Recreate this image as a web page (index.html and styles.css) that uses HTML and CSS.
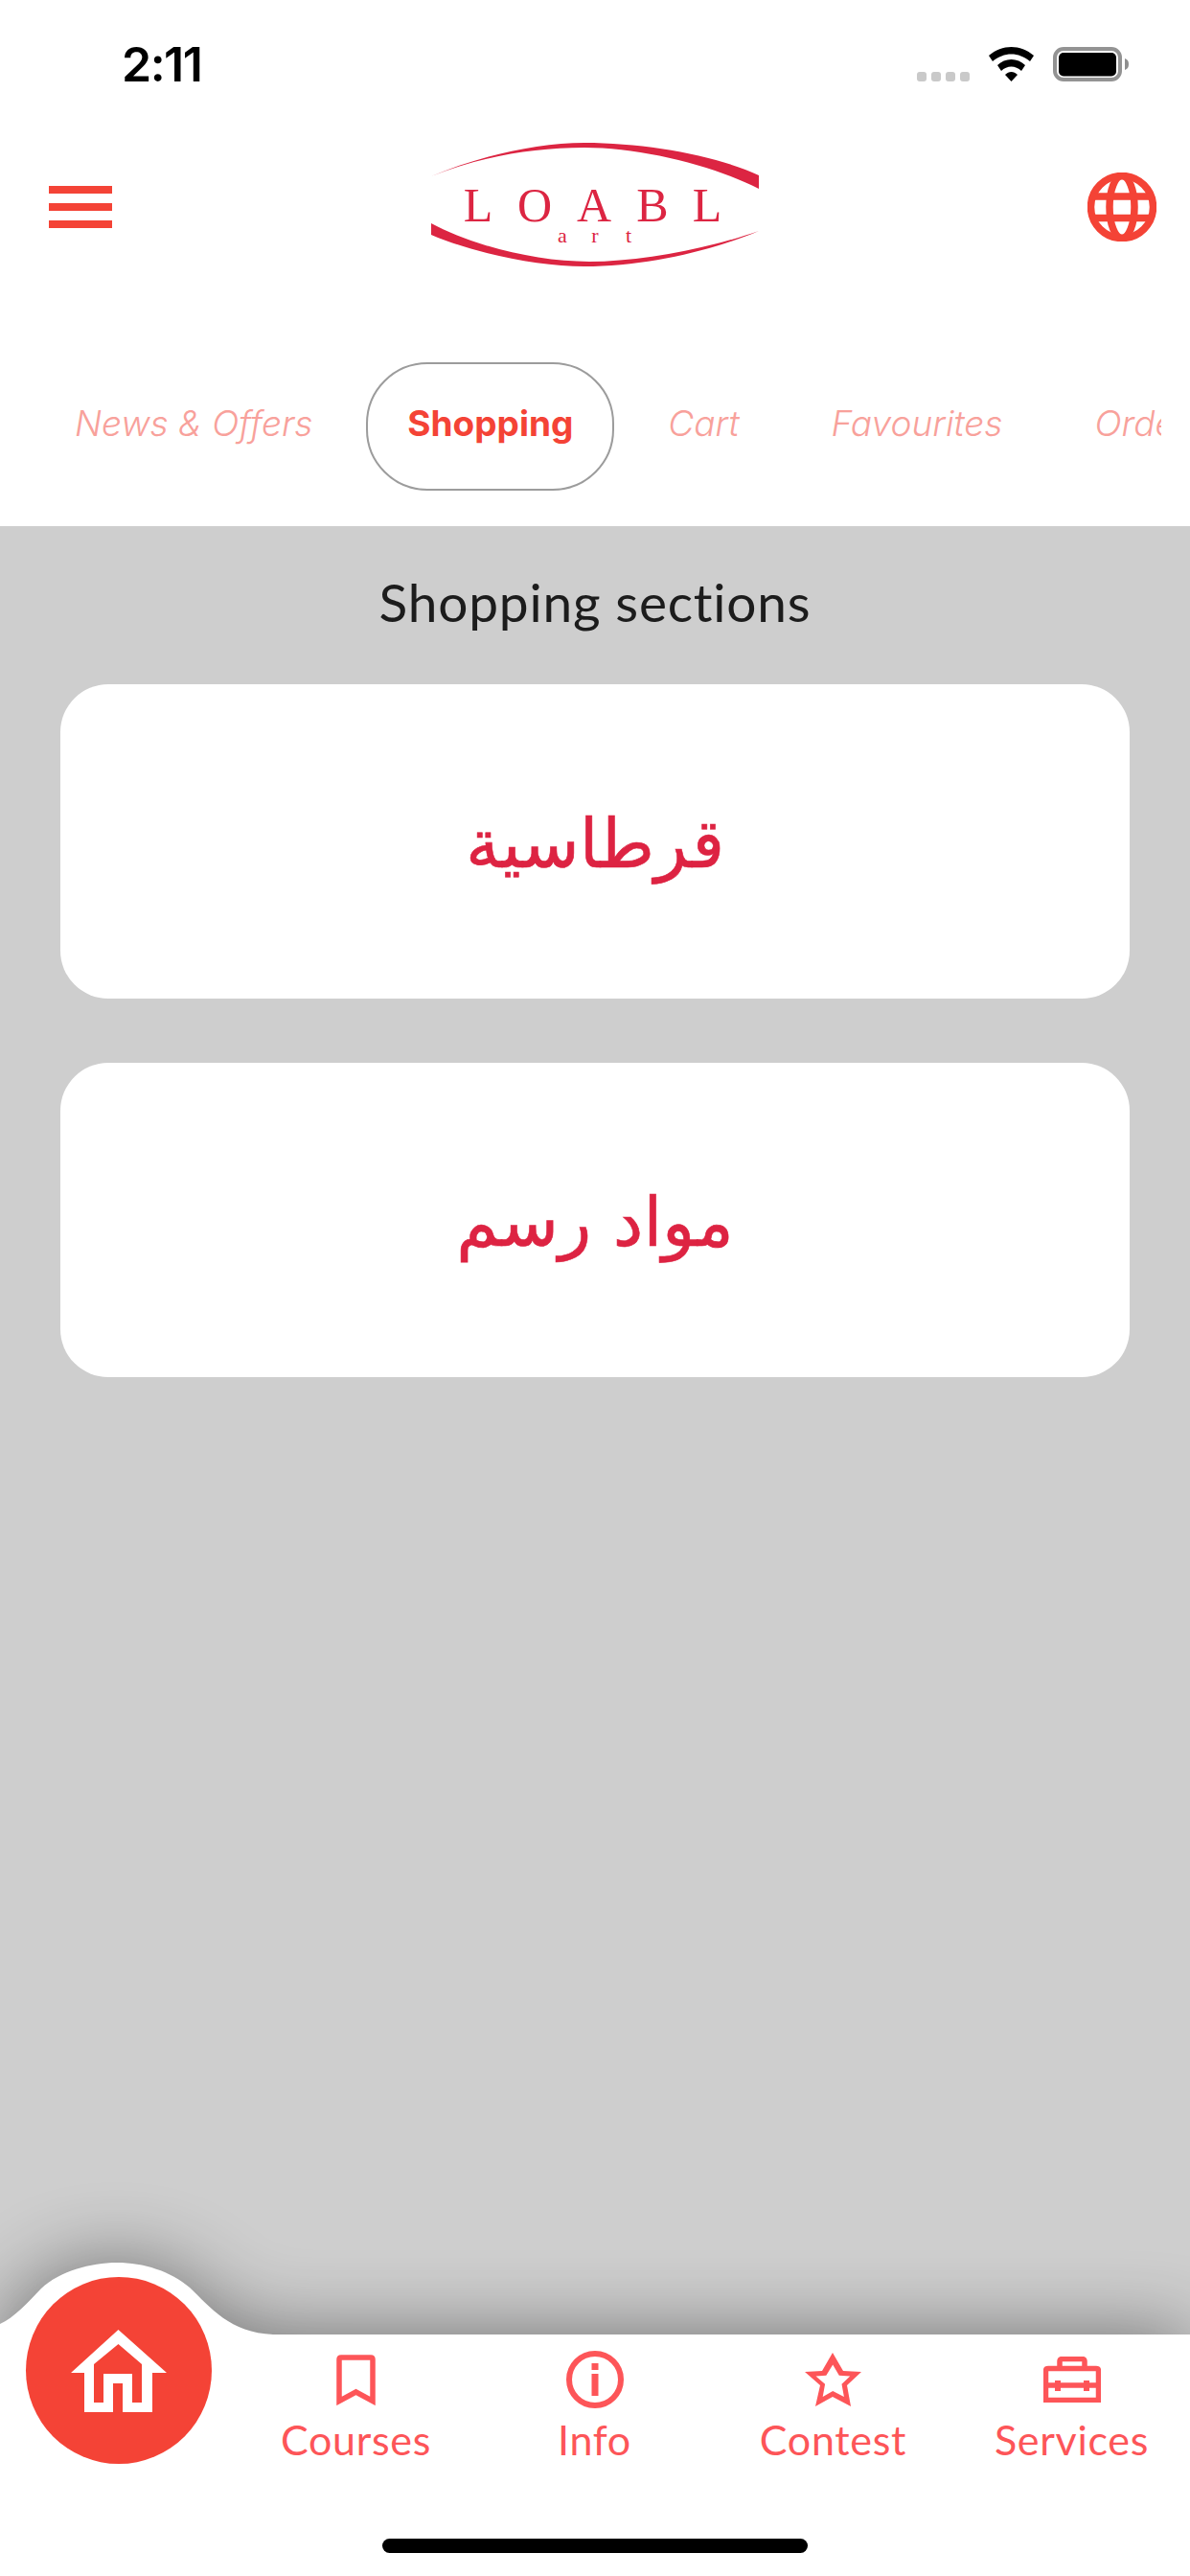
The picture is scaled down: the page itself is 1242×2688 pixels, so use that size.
FILE: index.html
```html
<!DOCTYPE html>
<html lang="en">
<head>
<meta charset="utf-8">
<title>LOABL art</title>
<link rel="stylesheet" href="styles.css">
</head>
<body>
<div class="screen">
  <div class="status">
    <span class="time">2:11</span>
    <div class="status-icons">
      <div class="signal"><i></i><i></i><i></i><i></i></div>
      <svg class="wifi" viewBox="0 0 47 36"><path d="M0 9C14-3 33-3 47 9L43 15C31 5 16 5 4 15Z"/><path d="M9 19C17 11 30 11 38 19L34 25C28 19 19 19 13 25Z"/><path d="M17 29C21 25 26 25 30 29L23.500 36Z"/></svg>
      <svg class="battery" viewBox="0 0 79 36"><rect class="batt-shell" x="2" y="2" width="68" height="32" rx="9"/><rect x="6" y="6" width="60" height="24.500" rx="5"/><path class="batt-nub" d="M75 12C78 13 79 15 79 18S78 23 75 24Z"/></svg>
    </div>
  </div>

  <header class="topbar">
    <div class="burger"><i></i><i></i><i></i></div>
    <svg class="logo" viewBox="0 0 342 129">
      <path d="M0 35C50 14 110 0 160 0C225 0 300 14 342 34V48C295 24 220 5 160 5C105 5 50 15 0 35Z"/>
      <path d="M0 84V96C45 115 110 129 160 129C225 129 295 112 342 92C290 110 220 124 165 124C110 124 45 108 0 84Z"/>
      <text class="logo-main" x="49 108 170 231 288" y="82">LOABL</text>
      <text class="logo-sub" x="137 171 206" y="104">art</text>
    </svg>
    <svg class="globe" viewBox="0 0 72 72"><circle cx="36" cy="36" r="32.500"/><ellipse cx="36" cy="36" rx="13" ry="32.500"/><path d="M4 25H68M4 47.500H68"/></svg>
  </header>

  <nav class="tabs">
    <span class="tab">News &amp; Offers</span>
    <span class="tab tab-active">Shopping</span>
    <span class="tab">Cart</span>
    <span class="tab">Favourites</span>
    <span class="tab">Orders</span>
  </nav>

  <main class="content">
    <h1 class="title">Shopping sections</h1>
    <div class="card" dir="rtl" lang="ar"><span class="card-text">قرطاسية</span></div>
    <div class="card" dir="rtl" lang="ar"><span class="card-text">مواد رسم</span></div>
  </main>

  <footer class="bottom">
    <svg class="bottom-shape" viewBox="0 0 1242 252"><path d="M0-11C14-17 30-34 43-48C62-66 95-75 122-75C150-75 178-66 198-49C220-28 240-2 285 0H1242V252H0Z"/></svg>
    <div class="fab">
      <svg class="fab-icon" viewBox="0 0 100 86"><path fill-rule="evenodd" d="M49.500 0L100 45H85V86H54V56H44V86H14V45H0ZM49.500 15L24 36V76H34V46H64V76H74V36Z"/></svg>
    </div>
    <div class="nav">
      <div class="nav-item">
        <div class="nav-icon"><svg class="ic-stroke" width="41" height="53" viewBox="0 0 41 53"><path d="M3 48.500V5Q3 3 5 3H36Q38 3 38 5V48.500L20.500 39Z"/></svg></div>
        <span class="nav-label">Courses</span>
      </div>
      <div class="nav-item">
        <div class="nav-icon"><svg class="ic-info" width="60" height="60" viewBox="0 0 60 60"><circle cx="30" cy="30" r="27"/><rect x="26.500" y="13" width="7" height="7"/><rect x="26.500" y="24" width="7" height="23"/></svg></div>
        <span class="nav-label">Info</span>
      </div>
      <div class="nav-item">
        <div class="nav-icon"><svg class="ic-fill" width="59" height="56" viewBox="0 0 59 56"><path fill-rule="evenodd" d="M29 0L40 19L59 20L44 34L48 56L29 46L11 56L16 34L0 20L18 19ZM29.200 12.400L22.300 23.800L11.500 24.400L21.100 32.800L18.700 46L29.200 40L40.900 46L38.500 32.800L47.200 24.400L35.800 23.800Z"/></svg></div>
        <span class="nav-label">Contest</span>
      </div>
      <div class="nav-item">
        <div class="nav-icon"><svg class="ic-stroke" width="60" height="48" viewBox="0 0 60 48"><path d="M17 12V5Q17 2.500 20 2.500H40Q43 2.500 43 5V12"/><path d="M2.500 45.500V15Q2.500 12.500 5 12.500H55Q57.500 12.500 57.500 15V45.500Z"/><path d="M2.500 30H57.500"/><path class="clasp" d="M15 25V36M45 25V36"/></svg></div>
        <span class="nav-label">Services</span>
      </div>
    </div>
    <div class="home-indicator"></div>
  </footer>
</div>
</body>
</html>
```
FILE: styles.css
```css
* { box-sizing: border-box; }
html, body { margin: 0; padding: 0; background: #fff; }
.screen { width: 1242px; height: 2688px; display: flex; flex-direction: column; overflow: hidden; font-family: Lato, "Liberation Sans", sans-serif; font-variant-ligatures: none; }

.status { height: 100px; flex: none; display: flex; justify-content: space-between; padding: 49px 64px 0 127px; }
.time { font: 600 50px/37px Inter, "Liberation Sans", sans-serif; color: #000; letter-spacing: -1.500px; }
.status-icons { display: flex; gap: 20px; height: 36px; }
.signal { display: flex; gap: 5px; align-self: flex-end; }
.signal i { width: 10px; height: 10px; border-radius: 3px; background: #c9c9c9; }
.wifi { width: 47px; height: 36px; fill: #000; }
.battery { width: 79px; height: 36px; fill: #000; }
.batt-shell { fill: none; stroke: #939393; stroke-width: 4; }
.batt-nub { fill: #8f8f8f; }

.topbar { height: 232px; flex: none; display: flex; align-items: center; justify-content: space-between; padding: 0 35px 0 51px; }
.burger { width: 66px; display: flex; flex-direction: column; gap: 10.500px; }
.burger i { height: 7.500px; background: #f44336; }
.logo { width: 342px; height: 129px; fill: #dc2542; margin: 0 0 5px -10px; }
.logo-main { font: 50px "Liberation Serif", serif; text-anchor: middle; }
.logo-sub { font: 22px "Liberation Serif", serif; text-anchor: middle; }
.globe { width: 72px; height: 72px; fill: none; stroke: #f44336; stroke-width: 7.500; }

.tabs { height: 217px; flex: none; display: flex; align-items: flex-start; margin-right: 30px; padding: 46px 0 0 30px; overflow: hidden; white-space: nowrap; }
.tab { flex: none; padding: 0 48px; height: 134px; font: italic 300 37px/128px Inter, "Liberation Sans", sans-serif; color: #f8a19b; }
.tab-active { margin: 0 8px; padding: 0 41px; border: 2.500px solid #9c9c9c; border-radius: 64px; font: 700 37px/123px Inter, "Liberation Sans", sans-serif; color: #f44336; }

.content { flex: 1; background: #cecece; padding: 0 63px; display: flex; flex-direction: column; }
.title { margin: 49px 0 29px; height: 87px; font: 400 55px/60px Lato, sans-serif; letter-spacing: .8px; color: #1c1c1c; text-align: center; }
.card { height: 328px; margin-bottom: 67px; background: #fff; border-radius: 50px; display: flex; align-items: center; justify-content: center; font: 400 71px/1 "DejaVu Sans", sans-serif; color: #dd2342; }
.card-text { padding-top: 4px; -webkit-text-stroke: .6px #dd2342; }

.bottom { height: 252px; flex: none; position: relative; display: flex; flex-direction: column; }
.bottom-shape { position: absolute; left: 0; top: 0; width: 1242px; height: 252px; overflow: visible; fill: #fff; filter: drop-shadow(0 0 40px rgba(0,0,0,.45)); }
.fab { position: absolute; left: 27px; top: -60px; width: 194px; height: 195px; border-radius: 50%; background: #f44336; display: flex; align-items: center; justify-content: center; }
.fab-icon { width: 100px; height: 86px; fill: #fff; }
.nav { position: relative; display: grid; grid-template-columns: repeat(4, 249px); padding: 17px 0 0 247px; }
.nav-item { display: flex; flex-direction: column; align-items: center; color: #fd5558; }
.nav-icon { height: 60px; display: flex; align-items: center; justify-content: center; }
.nav-label { font: 400 43px/50px Lato, sans-serif; letter-spacing: .7px; margin-top: 8px; }
.ic-stroke { fill: none; stroke: #fd5558; stroke-width: 5.500; }
.clasp { stroke-width: 6; }
.ic-fill { fill: #fd5558; }
.ic-info { fill: #fd5558; }
.ic-info circle { fill: none; stroke: #fd5558; stroke-width: 6; }
.home-indicator { position: relative; width: 444px; height: 15px; margin: auto auto 24px; border-radius: 8px; background: #000; }
```
